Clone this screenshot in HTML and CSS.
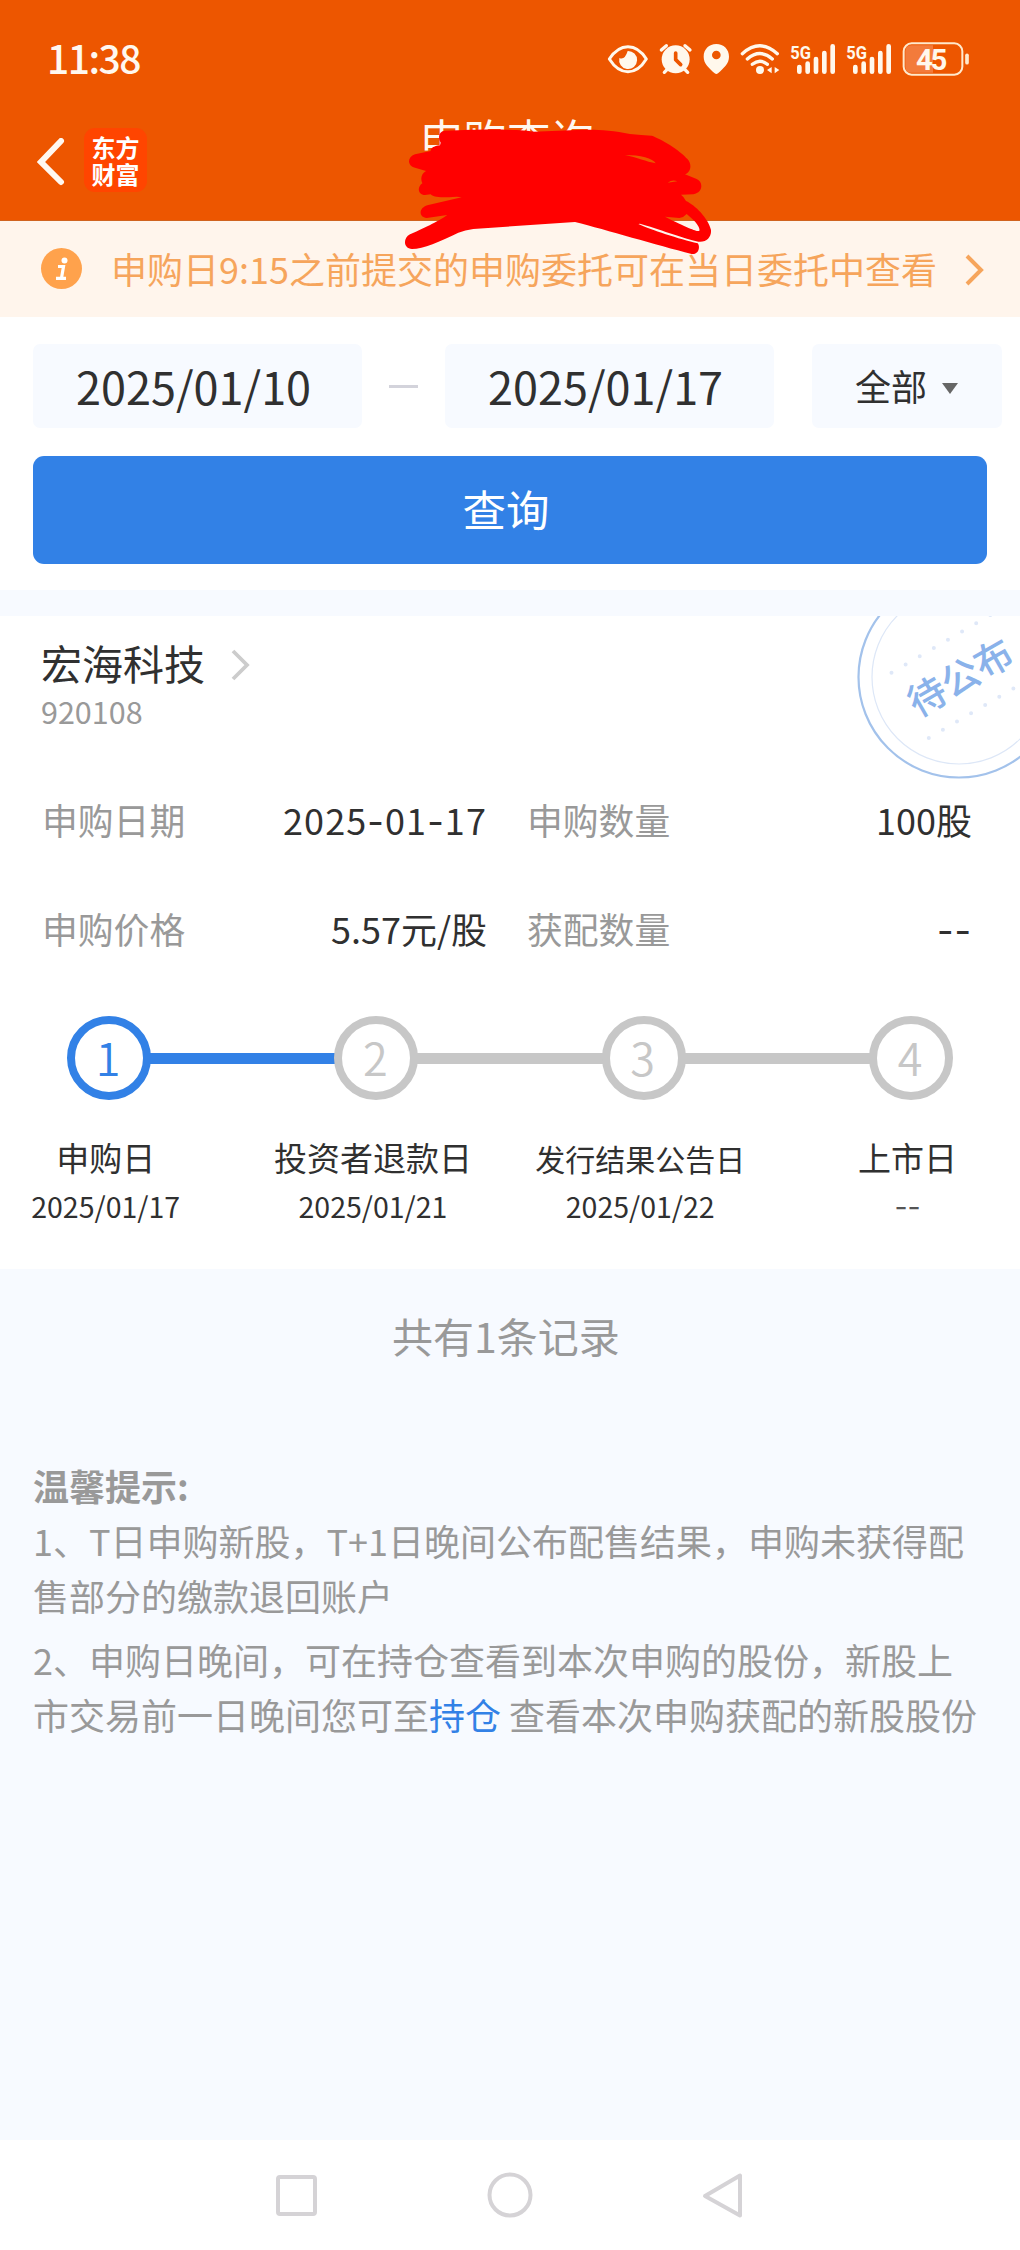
FILE: index.html
```html
<!DOCTYPE html>
<html lang="zh-CN">
<head>
<meta charset="utf-8">
<title>申购查询</title>
<link rel="stylesheet" href="styles.css">
</head>
<body>
<header class="header">
  <div class="status">
    <span class="clock">11:38</span>
    <svg class="status-icons" viewBox="0 0 1200 240" fill="none" stroke="#fff8ec" stroke-linecap="round" stroke-linejoin="round">
      <path d="M58 117C90 68 138 68 169 117C138 168 90 168 58 117Z" stroke-width="9"/>
      <path d="M113 93A27 27 0 1 1 88 114Q104 122 113 93Z" fill="#fff8ec" stroke="none"/>
      <circle cx="257" cy="118" r="42" fill="#fff8ec" stroke="none"/>
      <path d="M214 90L229 77M300 90L285 77M223 157L231 149M293 157L285 149" stroke-width="10"/>
      <path d="M257 99V119L272 134" stroke="#ed5600" stroke-width="11"/>
      <path fill-rule="evenodd" d="M379 72C401 72 417 88 417 110C417 132 401 143 384 160Q379 164 374 160C357 143 341 132 341 110C341 88 357 72 379 72ZM379 92A13 13 0 1 0 379 118A13 13 0 1 0 379 92Z" fill="#fff8ec" stroke="none"/>
      <path d="M457 101Q510 54 562 101M472 117Q510 84 547 117M487 133Q510 114 532 133" stroke-width="10"/>
      <circle cx="510" cy="150" r="12" fill="#fff8ec" stroke="none"/>
      <path d="M545 141V160L531 150ZM554 141V160L568 150Z" fill="#fff8ec" stroke="none"/>
      <path d="M628 141V155M653 131V155M678 117V155M703 99V155M728 79V155M796 141V155M821 131V155M846 117V155M871 99V155M896 79V155" stroke-width="14"/>
      <g class="net" fill="#fff8ec" stroke="none">
        <text x="601" y="116" textLength="62" lengthAdjust="spacingAndGlyphs">5G</text>
        <text x="769" y="116" textLength="62" lengthAdjust="spacingAndGlyphs">5G</text>
      </g>
      <path d="M1029 76H964Q946 76 946 94V140Q946 158 964 158H1029Z" fill="#f37b3b" stroke="none"/>
      <rect x="941" y="70" width="176" height="94" rx="24" stroke="#ffe9cc" stroke-width="6"/>
      <path d="M1131 106V128" stroke="#ffe9cc" stroke-width="11"/>
      <text class="battery" x="978" y="150" textLength="94" fill="#fff8ec" stroke="none">45</text>
    </svg>
  </div>
  <div class="nav">
    <div class="nav-left">
      <svg class="back" viewBox="0 0 28 48"><path d="M24 3L4 24L24 44" fill="none" stroke="#fff8f0" stroke-width="6" stroke-linecap="round" stroke-linejoin="miter"/></svg>
      <span class="logo">东方<br>财富</span>
    </div>
    <h1 class="title">申购查询</h1>
  </div>
  <svg class="scribble" viewBox="0 0 1020 480">
    <path fill="#f00" fill-rule="evenodd" d="M165 92C148 92 142 112 152 128L150 136C130 138 122 145 122 153L75 163C50 172 52 198 75 203L108 213C95 220 90 235 97 250C80 262 84 285 105 285L122 283C130 292 150 294 200 290L215 292L115 315C85 322 85 352 110 354L172 345C150 362 90 390 60 403C38 415 40 445 66 447C100 446 150 425 205 398Q225 390 250 387L555 366C650 390 800 435 905 462C925 465 932 440 923 430C870 418 780 388 745 372L750 371C800 385 880 415 925 425C950 428 965 410 963 390C955 355 915 315 888 303Q882 290 873 284L910 283C940 278 940 245 920 237L885 223C905 215 905 190 893 178C870 150 810 115 785 107Q755 105 720 102C660 88 600 88 560 90L430 95C400 88 300 86 165 92ZM825 350L868 354Q882 352 890 342C910 358 932 380 928 392C925 396 900 388 825 350ZM705 165C750 165 790 175 797 190C770 185 740 172 705 165ZM833 248Q847 238 862 244Z"/>
  </svg>
</header>

<a class="notice">
  <svg class="info" viewBox="0 0 41 41"><circle cx="20.5" cy="20.5" r="20.5" fill="#ffa24c"/><circle cx="23.5" cy="12.5" r="3" fill="#fff"/><path d="M17 18.500H22.500L20.500 30M15 30.300H25" fill="none" stroke="#fff" stroke-width="3.200"/></svg>
  <span class="notice-text">申购日9:15之前提交的申购委托可在当日委托中查看</span>
  <svg class="notice-arrow" viewBox="0 0 20 32"><path d="M2 2L16 16L2 30" fill="none" stroke="#f6a55c" stroke-width="4"/></svg>
</a>

<section class="search">
  <div class="filters">
    <span class="date">2025/01/10</span>
    <span class="dash"></span>
    <span class="date">2025/01/17</span>
    <span class="select">全部<i class="caret"></i></span>
  </div>
  <button class="query">查询</button>
</section>

<section class="card">
  <svg class="stamp" viewBox="0 0 204 204">
    <circle cx="102" cy="102" r="100.500" fill="none" stroke="#a3c2eb" stroke-width="2.200"/>
    <circle cx="102" cy="102" r="87" fill="none" stroke="#dde7f7" stroke-width="1.200"/>
    <path d="M34.500 97.700L148 31.500M71.800 163L175 102.500" stroke="#dfe8f8" stroke-width="4" stroke-linecap="round" stroke-dasharray="0 16.340"/>
    <text x="103" y="116.500" text-anchor="middle" transform="rotate(-30 103 102)">待公布</text>
  </svg>
  <div class="stock">
    <h2 class="stock-name">宏海科技</h2>
    <svg class="stock-arrow" viewBox="0 0 20 32"><path d="M2 2L16 16L2 30" fill="none" stroke="#ccc" stroke-width="3.800"/></svg>
  </div>
  <div class="code">920108</div>
  <dl class="facts">
    <div class="fact"><dt>申购日期</dt><dd class="wide">2025<b>-</b>01<b>-</b>17</dd></div>
    <div class="fact"><dt>申购数量</dt><dd>100股</dd></div>
    <div class="fact"><dt>申购价格</dt><dd>5.57元/股</dd></div>
    <div class="fact"><dt>获配数量</dt><dd><b class="empty">--</b></dd></div>
  </dl>
  <div class="track">
    <span class="dot on">1</span><span class="line on"></span>
    <span class="dot">2</span><span class="line"></span>
    <span class="dot">3</span><span class="line"></span>
    <span class="dot">4</span>
  </div>
  <ol class="labels">
    <li><span class="step">申购日</span><span class="day">2025/01/17</span></li>
    <li><span class="step">投资者退款日</span><span class="day">2025/01/21</span></li>
    <li><span class="step small">发行结果公告日</span><span class="day">2025/01/22</span></li>
    <li><span class="step">上市日</span><span class="day none">--</span></li>
  </ol>
</section>

<main class="rest">
  <p class="count">共有1条记录</p>
  <div class="tips">
    <h3>温馨提示:</h3>
    <p>1、T日申购新股，T+1日晚间公布配售结果，申购未获得配售部分的缴款退回账户</p>
    <p>2、申购日晚间，可在持仓查看到本次申购的股份，新股上市交易前一日晚间您可至<a>持仓</a> 查看本次申购获配的新股股份</p>
  </div>
</main>

<footer class="sysnav">
  <svg viewBox="0 0 48 48"><rect x="5" y="5" width="37" height="37" rx="2"/></svg>
  <svg viewBox="0 0 48 48"><circle cx="24" cy="23" r="20.500"/></svg>
  <svg viewBox="0 0 48 48"><path d="M42 3.500V43.500L7 24Z"/></svg>
</footer>
</body>
</html>
```
FILE: styles.css
```css
* { box-sizing: border-box; margin: 0; padding: 0; }

body {
  width: 1020px;
  height: 2250px;
  display: flex;
  flex-direction: column;
  overflow: hidden;
  background: #f7faff;
  color: #303030;
  font-family: "Noto Sans CJK SC", "Noto Sans", sans-serif;
  font-size: 36px;
}

/* Header */
.header {
  position: relative;
  height: 221px;
  flex: none;
  padding-top: 20px;
  background: #ed5600;
  border-bottom: 1px solid #d0631f;
  color: #fff8f0;
}
.status {
  height: 80px;
  display: flex;
  justify-content: space-between;
  padding: 0 30px 0 47px;
}
.clock { font-size: 39px; font-weight: 500; line-height: 75px; letter-spacing: -1.5px; }
.status-icons { width: 400px; height: 80px; }
.net { font: 700 54px Roboto, sans-serif; }
.battery { font: 700 88px Roboto, sans-serif; }
.nav { display: grid; grid-template-columns: 1fr auto 1fr; height: 120px; }
.nav-left { display: flex; align-items: center; gap: 19px; padding-left: 37px; }
.back { width: 28px; height: 48px; margin-top: 3px; }
.logo {
  width: 63px;
  height: 64px;
  padding-top: 5px;
  border-radius: 11px;
  background: #ff4500;
  color: #fff;
  font-size: 24px;
  font-weight: 700;
  line-height: 27px;
  text-align: center;
}
.title { margin: 8px 6px 0 0; font-size: 43.5px; font-weight: 400; line-height: 60px; }
.scribble { position: absolute; left: 390px; top: 100px; z-index: 2; width: 340px; height: 160px; }

/* Notice bar */
.notice {
  height: 96px;
  flex: none;
  display: flex;
  align-items: center;
  padding: 0 35px 2px 41px;
  background: #fff5ec;
  color: #f6a55c;
}
.info { width: 41px; height: 41px; margin-right: 29px; }
.notice-text { flex: 1; white-space: nowrap; }
.notice-arrow { width: 20px; height: 32px; margin-top: 3px; }

/* Date filters */
.search { height: 273px; flex: none; padding: 27px 33px 0; background: #fff; }
.filters { width: 969px; height: 84px; display: flex; align-items: center; }
.date, .select { height: 84px; border-radius: 7px; background: #f7faff; line-height: 84px; }
.date { width: 329px; padding-left: 43px; font-size: 45px; }
.dash { width: 29px; height: 3px; margin: 1px 27px 0; background: #d3d3db; }
.select { width: 190px; margin-left: auto; padding-left: 43px; line-height: 83px; }
.caret {
  display: inline-block;
  margin: 0 0 7px 15px;
  border: solid transparent;
  border-width: 11px 8.5px 0;
  border-top-color: #666;
}
.query {
  display: block;
  width: 954px;
  height: 108px;
  margin-top: 28px;
  padding: 0 8px 4px 0;
  border: 0;
  border-radius: 11px;
  background: #3281e6;
  color: #fff;
  font: inherit;
  font-size: 43.5px;
}

/* Record card */
.card {
  position: relative;
  height: 653px;
  flex: none;
  margin-top: 26px;
  padding-top: 16px;
  overflow: hidden;
  background: #fff;
}
.stamp { position: absolute; left: 856.5px; top: -41px; width: 204px; height: 204px; }
.stamp text { font-size: 38px; font-weight: 500; fill: #8ab2ea; }
.stock { display: flex; align-items: center; padding-left: 41px; }
.stock-name { font-size: 41px; font-weight: 400; line-height: 60px; }
.stock-arrow { width: 20px; height: 32px; margin: 6px 0 0 26px; }
.code { padding-left: 41px; color: #999; font-size: 30.5px; line-height: 38px; }
.facts {
  display: grid;
  grid-template-columns: 445px 445px;
  column-gap: 40px;
  margin-top: 35px;
  padding-left: 42px;
}
.fact { display: flex; justify-content: space-between; line-height: 108.7px; height: 108.7px; }
.fact dt { color: #999; font-size: 35.8px; }
.fact b { font-family: Inter, sans-serif; font-weight: 400; }
.fact .empty { letter-spacing: 1px; }
.fact .wide { letter-spacing: 1.1px; }
.track { display: flex; align-items: center; margin-top: 34px; padding: 0 67px; }
.dot {
  width: 84px;
  height: 84px;
  flex: none;
  border: 8px solid #c7c7c7;
  border-radius: 50%;
  color: #c7c7c7;
  font-size: 45px;
  font-weight: 350;
  line-height: 65px;
  padding-right: 2px;
  text-align: center;
}
.dot.on { border-color: #3281e6; color: #3281e6; }
.line { flex: 1; height: 11px; margin: 0 -1px; background: #c7c7c7; }
.line.on { background: #3281e6; }
.labels {
  display: grid;
  grid-template-columns: repeat(4, 267.3px);
  margin: 33px 0 0 -28px;
  list-style: none;
}
.labels li { display: flex; flex-direction: column; align-items: center; }
.step { font-size: 33px; line-height: 48px; }
.step.small { padding-top: 3px; font-size: 30px; line-height: 45px; }
.day { margin-top: 3px; font-size: 28.5px; line-height: 44px; }
.none { padding-top: 1px; font-family: Inter, sans-serif; color: #555; }

/* Record count and tips */
.rest { flex: 1; color: #999; }
.count { padding: 36px 8px 0 0; font-size: 41px; line-height: 60px; text-align: center; }
.tips { margin: 93px 33px 0; line-height: 55px; }
.tips h3 { font-size: 36px; font-weight: 700; }
.tips p + p { margin-top: 9px; }
.tips a { color: #3281e6; }

/* System navigation */
.sysnav {
  height: 110px;
  flex: none;
  display: flex;
  justify-content: space-between;
  padding: 32px 274px 0 273px;
  background: #fff;
}
.sysnav svg { width: 48px; height: 48px; fill: none; stroke: #d5d3d6; stroke-width: 4; stroke-linejoin: round; }
```
